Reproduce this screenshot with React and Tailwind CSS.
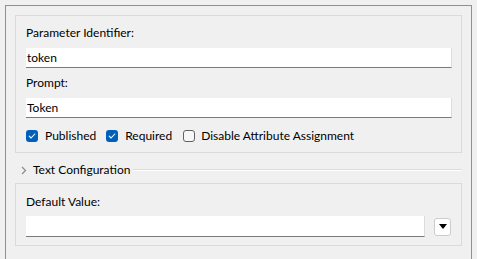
import React from "react";

const Check = ({ checked }) =>
  checked ? (
    <span className="flex h-[12px] w-[12px] items-center justify-center rounded-[3px] bg-[#005fb8]">
      <svg width="8" height="8" viewBox="0 0 8 8" fill="none">
        <path d="M1.2 4.2 L3.1 6 L6.8 2" stroke="white" strokeWidth="1.1" strokeLinecap="round" strokeLinejoin="round" />
      </svg>
    </span>
  ) : (
    <span className="h-[12px] w-[12px] rounded-[3px] border border-[#616161] bg-[#f7f7f7]" />
  );

const Field = ({ value, className = "" }) => (
  <div
    className={`flex h-[20px] items-center border-b border-r border-b-[#7a7a7a] border-r-[#dcdcdc] bg-white pl-[1px] ${className}`}
  >
    {value}
  </div>
);

const App = () => {
  return (
    <div
      className="h-[259px] w-[477px] overflow-hidden bg-[#f0f0f0] pl-[5px] pt-[5px] text-[12px] leading-[16px] text-black"
      style={{ fontFamily: 'Lato, sans-serif' }}
    >
      <div className="h-[280px] w-[467px] border border-[#8e8e9c] px-[9px] pt-[9px]">
        {/* General group */}
        <div className="border border-[#dadada] pl-[10px] pr-[9px] pt-[9px] pb-[8px]">
          <p>Parameter Identifier:</p>
          <Field value="token" className="mt-[7px]" />
          <p className="mt-[7px]">Prompt:</p>
          <Field value="Token" className="mt-[7px]" />
          <div className="mt-[10px] flex h-[16px] items-center">
            <label className="flex items-center gap-[7px]">
              <Check checked />
              <span>Published</span>
            </label>
            <label className="ml-[10px] flex items-center gap-[7px]">
              <Check checked />
              <span>Required</span>
            </label>
            <label className="ml-[11px] flex items-center gap-[6px]">
              <Check />
              <span>Disable Attribute Assignment</span>
            </label>
          </div>
        </div>

        {/* Text Configuration header */}
        <div className="mt-[9px] flex h-[16px] items-center">
          <svg width="6" height="9" viewBox="0 0 6 9" className="ml-[6px]">
            <path d="M1 1 L4.5 4.5 L1 8" stroke="#8a8a8a" strokeWidth="1.2" fill="none" />
          </svg>
          <span className="ml-[6px]">Text Configuration</span>
          <div className="ml-[3px] h-[2px] flex-1 border-t border-b border-t-[#dcdcdc] border-b-white" />
        </div>

        {/* Text Configuration group */}
        <div className="mt-[5px] border border-[#dadada] pl-[10px] pr-[10px] pt-[10px] pb-[8px]">
          <p>Default Value:</p>
          <div className="mt-[6px] flex items-center">
            <Field value="" className="h-[21px] flex-1" />
            <button className="ml-[9px] flex h-[18px] w-[17px] items-center justify-center rounded-[3px] border border-[#cccccc] bg-white">
              <svg width="8" height="5" viewBox="0 0 8 5">
                <path d="M0 0 H8 L4 5 Z" fill="#000" />
              </svg>
            </button>
          </div>
        </div>
      </div>
    </div>
  );
};

export default App;
